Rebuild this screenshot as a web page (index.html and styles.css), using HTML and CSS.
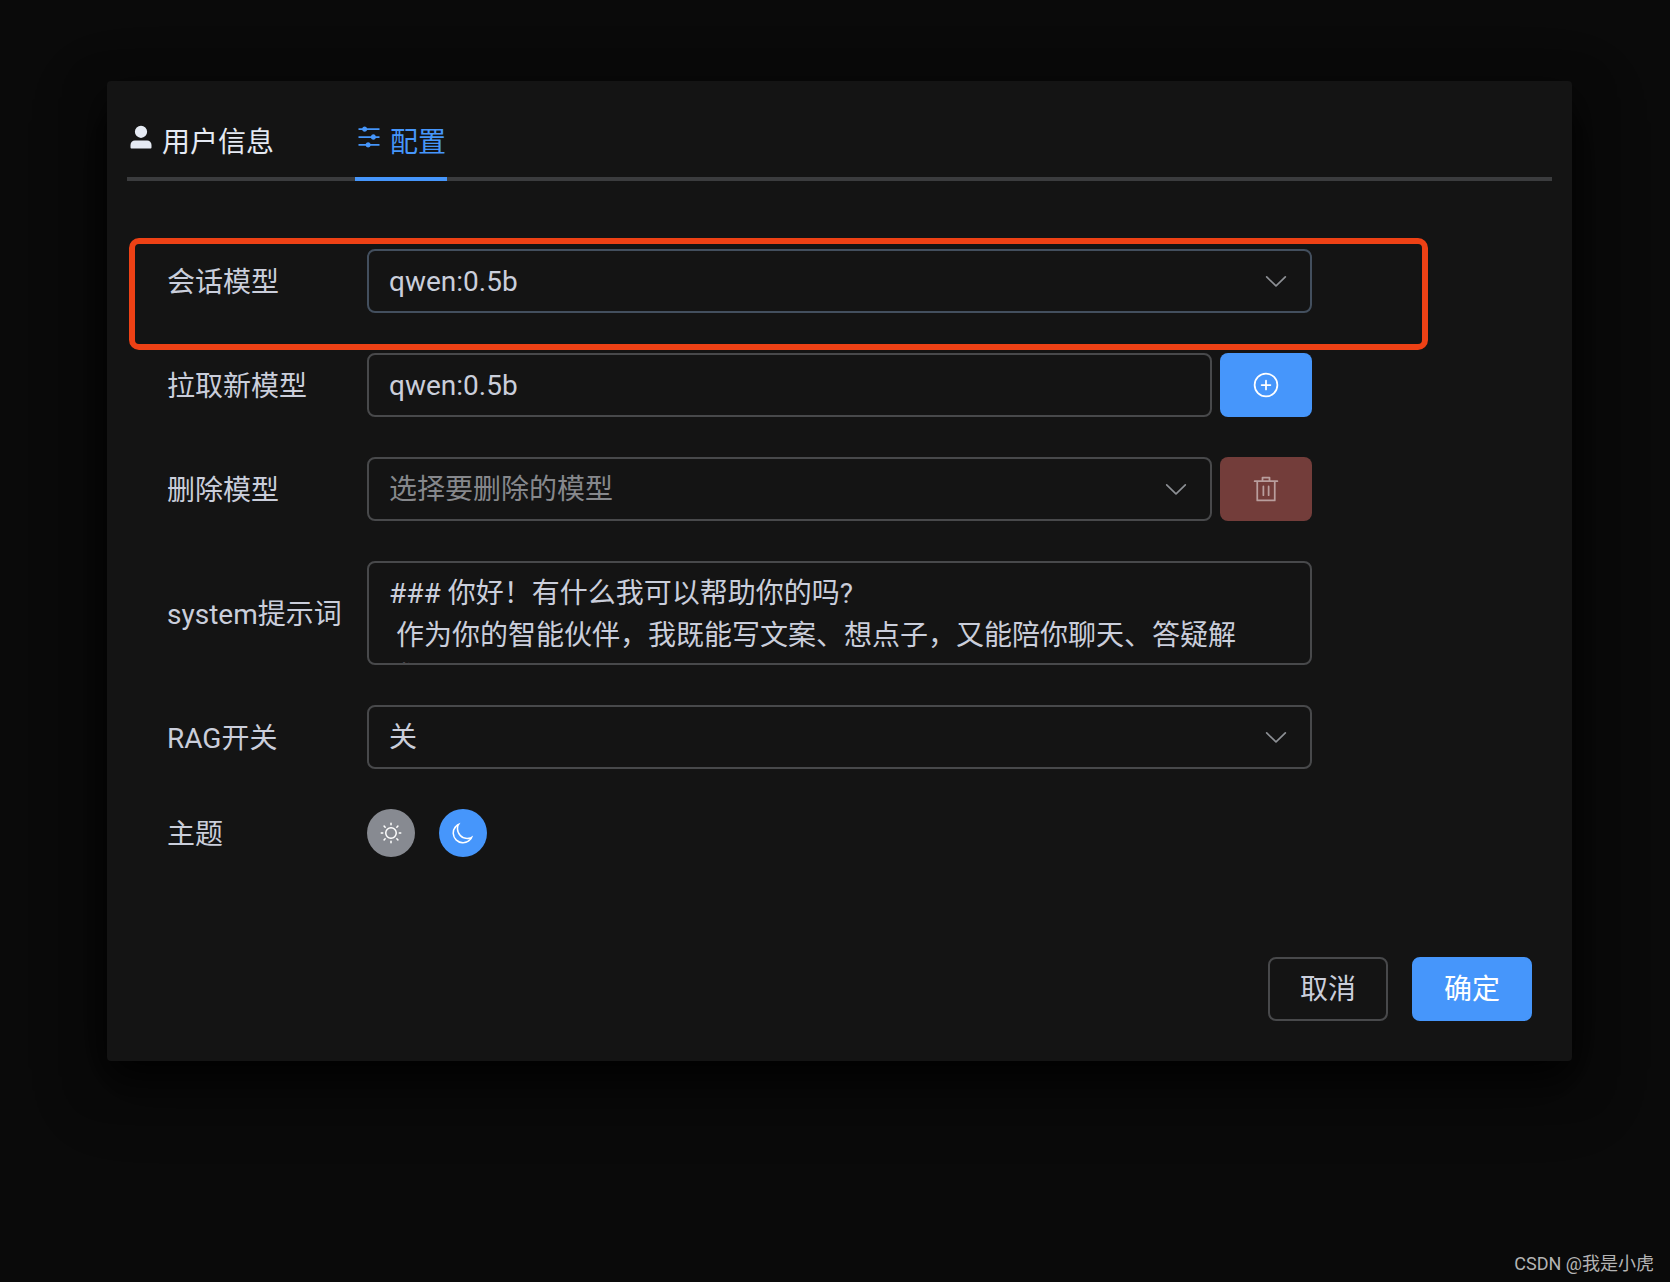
FILE: index.html
```html
<!DOCTYPE html>
<html lang="zh-CN">
<head>
<meta charset="utf-8">
<meta name="viewport" content="width=device-width, initial-scale=1">
<title>配置</title>
<link rel="stylesheet" href="styles.css">
</head>
<body>
<main class="dialog" role="dialog" aria-label="配置">
  <nav class="tabs">
    <a class="tab" href="#user">
      <svg class="icon" viewBox="0 0 1024 1024" aria-hidden="true"><path d="M288 320a224 224 0 1 0 448 0 224 224 0 1 0-448 0m544 608H160a32 32 0 0 1-32-32v-96a160 160 0 0 1 160-160h448a160 160 0 0 1 160 160v96a32 32 0 0 1-32 32z"/></svg>
      <span class="tab-text">用户信息</span>
    </a>
    <a class="tab tab-active" href="#config" aria-current="page">
      <svg class="icon" viewBox="0 0 1024 1024" aria-hidden="true"><path d="M389.44 768a96.064 96.064 0 0 1 181.12 0H896v64H570.56a96.064 96.064 0 0 1-181.12 0H128v-64zm192-288a96.064 96.064 0 0 1 181.12 0H896v64H762.56a96.064 96.064 0 0 1-181.12 0H128v-64zm-320-288a96.064 96.064 0 0 1 181.12 0H896v64H442.56a96.064 96.064 0 0 1-181.12 0H128v-64z"/></svg>
      <span class="tab-text">配置</span>
    </a>
  </nav>

  <form class="form" id="config">
    <div class="row row-marked">
      <label class="label" for="chat-model">会话模型</label>
      <div class="select">
        <select class="control control-hover" id="chat-model"><option>qwen:0.5b</option></select>
        <svg class="icon arrow" viewBox="0 0 1024 1024" aria-hidden="true"><path d="M831.872 340.864 512 652.672 192.128 340.864a30.592 30.592 0 0 0-42.752 0 29.12 29.12 0 0 0 0 41.6L489.664 714.24a32 32 0 0 0 44.672 0l340.288-331.712a29.12 29.12 0 0 0 0-41.728 30.592 30.592 0 0 0-42.752 0z"/></svg>
      </div>
    </div>

    <div class="row">
      <label class="label" for="pull-model">拉取新模型</label>
      <div class="group">
        <input class="control" id="pull-model" type="text" value="qwen:0.5b">
        <button class="action action-primary" type="button" aria-label="拉取">
          <svg class="icon" viewBox="0 0 1024 1024" aria-hidden="true"><path d="M352 480h320a32 32 0 1 1 0 64H352a32 32 0 0 1 0-64"/><path d="M480 672V352a32 32 0 1 1 64 0v320a32 32 0 0 1-64 0"/><path d="M512 896a384 384 0 1 0 0-768 384 384 0 0 0 0 768m0 64a448 448 0 1 1 0-896 448 448 0 0 1 0 896"/></svg>
        </button>
      </div>
    </div>

    <div class="row">
      <label class="label" for="delete-model">删除模型</label>
      <div class="group">
        <div class="select">
          <select class="control control-empty" id="delete-model"><option>选择要删除的模型</option></select>
          <svg class="icon arrow" viewBox="0 0 1024 1024" aria-hidden="true"><path d="M831.872 340.864 512 652.672 192.128 340.864a30.592 30.592 0 0 0-42.752 0 29.12 29.12 0 0 0 0 41.6L489.664 714.24a32 32 0 0 0 44.672 0l340.288-331.712a29.12 29.12 0 0 0 0-41.728 30.592 30.592 0 0 0-42.752 0z"/></svg>
        </div>
        <button class="action action-danger" type="button" aria-label="删除" disabled>
          <svg class="icon" viewBox="0 0 1024 1024" aria-hidden="true"><path d="M160 256H96a32 32 0 0 1 0-64h256V95.936a32 32 0 0 1 32-32h256a32 32 0 0 1 32 32V192h256a32 32 0 1 1 0 64h-64v672a32 32 0 0 1-32 32H192a32 32 0 0 1-32-32zm448-64v-64H416v64zM224 896h576V256H224zm192-128a32 32 0 0 1-32-32V416a32 32 0 0 1 64 0v320a32 32 0 0 1-32 32m192 0a32 32 0 0 1-32-32V416a32 32 0 0 1 64 0v320a32 32 0 0 1-32 32"/></svg>
        </button>
      </div>
    </div>

    <div class="row">
      <label class="label" for="system-prompt">system提示词</label>
      <textarea class="control prompt" id="system-prompt">### 你好！有什么我可以帮助你的吗?
 作为你的智能伙伴，我既能写文案、想点子，又能陪你聊天、答疑解惑。</textarea>
    </div>

    <div class="row">
      <label class="label" for="rag">RAG开关</label>
      <div class="select">
        <select class="control" id="rag"><option>关</option><option>开</option></select>
        <svg class="icon arrow" viewBox="0 0 1024 1024" aria-hidden="true"><path d="M831.872 340.864 512 652.672 192.128 340.864a30.592 30.592 0 0 0-42.752 0 29.12 29.12 0 0 0 0 41.6L489.664 714.24a32 32 0 0 0 44.672 0l340.288-331.712a29.12 29.12 0 0 0 0-41.728 30.592 30.592 0 0 0-42.752 0z"/></svg>
      </div>
    </div>

    <div class="row">
      <span class="label" id="theme-label">主题</span>
      <div class="themes" role="group" aria-labelledby="theme-label">
        <button class="theme theme-light" type="button" aria-label="浅色">
          <svg class="icon icon-small" viewBox="0 0 1024 1024" aria-hidden="true"><path d="M512 704a192 192 0 1 0 0-384 192 192 0 0 0 0 384m0 64a256 256 0 1 1 0-512 256 256 0 0 1 0 512m0-704a32 32 0 0 1 32 32v64a32 32 0 0 1-64 0V96a32 32 0 0 1 32-32m0 768a32 32 0 0 1 32 32v64a32 32 0 1 1-64 0v-64a32 32 0 0 1 32-32M195.2 195.2a32 32 0 0 1 45.248 0l45.248 45.248a32 32 0 1 1-45.248 45.248L195.2 240.448a32 32 0 0 1 0-45.248m543.104 543.104a32 32 0 0 1 45.248 0l45.248 45.248a32 32 0 0 1-45.248 45.248l-45.248-45.248a32 32 0 0 1 0-45.248M64 512a32 32 0 0 1 32-32h64a32 32 0 0 1 0 64H96a32 32 0 0 1-32-32m768 0a32 32 0 0 1 32-32h64a32 32 0 1 1 0 64h-64a32 32 0 0 1-32-32M195.2 828.8a32 32 0 0 1 0-45.248l45.248-45.248a32 32 0 0 1 45.248 45.248L240.448 828.8a32 32 0 0 1-45.248 0m543.104-543.104a32 32 0 0 1 0-45.248l45.248-45.248a32 32 0 0 1 45.248 45.248l-45.248 45.248a32 32 0 0 1-45.248 0"/></svg>
        </button>
        <button class="theme theme-dark" type="button" aria-label="深色" aria-pressed="true">
          <svg class="icon icon-small" viewBox="0 0 1024 1024" aria-hidden="true"><path d="M240.448 240.448a384 384 0 1 0 559.424 525.696 448 448 0 0 1-542.016-542.08 391 391 0 0 0-17.408 16.384m181.056 362.048a384 384 0 0 0 525.632 16.384A448 448 0 1 1 405.056 76.8a384 384 0 0 0 16.448 525.696"/></svg>
        </button>
      </div>
    </div>
  </form>

  <footer class="footer">
    <button class="button" type="button">取消</button>
    <button class="button button-primary" type="button">确定</button>
  </footer>
</main>
<p class="watermark">CSDN @我是小虎</p>
</body>
</html>
```
FILE: styles.css
```css
:root {
  --primary: #4696fb;
  --line: #48494b;
  --text: #cacedb;
  --surface: #141414;
}

* {
  box-sizing: border-box;
}

body {
  display: flex;
  flex-direction: column;
  min-height: 100vh;
  margin: 0;
  padding: 81px 98px 0 107px;
  background: #0a0a0a;
  color: var(--text);
  font: 28px/42px Roboto, "Noto Sans CJK SC", sans-serif;
}

button,
input,
select,
textarea {
  margin: 0;
  font: inherit;
  color: inherit;
}

.dialog {
  padding: 32px 20px 40px;
  border-radius: 4px;
  background: var(--surface);
  box-shadow: 0 24px 64px 8px rgba(0, 0, 0, 0.36), 0 16px 40px rgba(0, 0, 0, 0.72);
}

.icon {
  display: block;
  flex: none;
  width: 28px;
  height: 28px;
  fill: currentColor;
}

.icon-small {
  width: 24px;
  height: 24px;
}

.tabs {
  display: flex;
  gap: 80px;
  box-shadow: inset 0 -4px #3b3c3e;
}

.tab {
  display: flex;
  align-items: flex-start;
  gap: 7px;
  height: 68px;
  padding: 10px 1px 0 0;
  color: #e5eaf3;
  text-decoration: none;
}

.tab-text {
  line-height: 40px;
}

.tab-active {
  color: var(--primary);
  border-bottom: 4px solid var(--primary);
}

.form {
  display: grid;
  gap: 40px;
  padding: 68px 240px 100px 40px;
}

.row {
  position: relative;
  display: grid;
  grid-template-columns: 200px minmax(0, 1fr);
  align-items: center;
}

.row-marked::after {
  content: "";
  position: absolute;
  inset: -11px -116px -37px -38px;
  border: 6px solid #ee4115;
  border-radius: 10px;
  pointer-events: none;
}

.label {
  padding-top: 3px;
}

.control {
  display: block;
  width: 100%;
  height: 64px;
  padding: 1px 20px 0;
  border: 2px solid var(--line);
  border-radius: 8px;
  outline: none;
  background: transparent;
  appearance: none;
}

.control-hover {
  border-color: #434f5e;
}

.control-empty {
  color: #86888c;
}

.prompt {
  height: 104px;
  padding: 10px 20px;
  overflow: hidden;
  resize: none;
}

.select {
  position: relative;
  flex: 1;
}

.arrow {
  position: absolute;
  top: 18px;
  right: 22px;
  color: #8d9095;
  pointer-events: none;
}

.group {
  display: flex;
  gap: 8px;
}

.action {
  display: grid;
  flex: none;
  place-items: center;
  width: 92px;
  height: 64px;
  padding: 0;
  border: 0;
  border-radius: 8px;
  color: #fff;
}

.action-primary {
  background: var(--primary);
}

.action-danger {
  background: #733d3a;
  color: #b99e9d;
}

.themes {
  display: flex;
  gap: 24px;
}

.theme {
  display: grid;
  place-items: center;
  width: 48px;
  height: 48px;
  padding: 0;
  border: 0;
  border-radius: 50%;
  color: #fff;
}

.theme-light {
  background: #878a91;
}

.theme-dark {
  background: var(--primary);
}

.footer {
  display: flex;
  justify-content: flex-end;
  gap: 24px;
  padding-right: 20px;
}

.button {
  height: 64px;
  padding: 2px 30px 0;
  border: 2px solid var(--line);
  border-radius: 8px;
  background: transparent;
}

.button-primary {
  border-color: var(--primary);
  background: var(--primary);
  color: #fff;
}

.watermark {
  align-self: flex-end;
  margin: auto -82px 5px 0;
  color: #b4b4b4;
  font-size: 18px;
  line-height: 26px;
}
```
